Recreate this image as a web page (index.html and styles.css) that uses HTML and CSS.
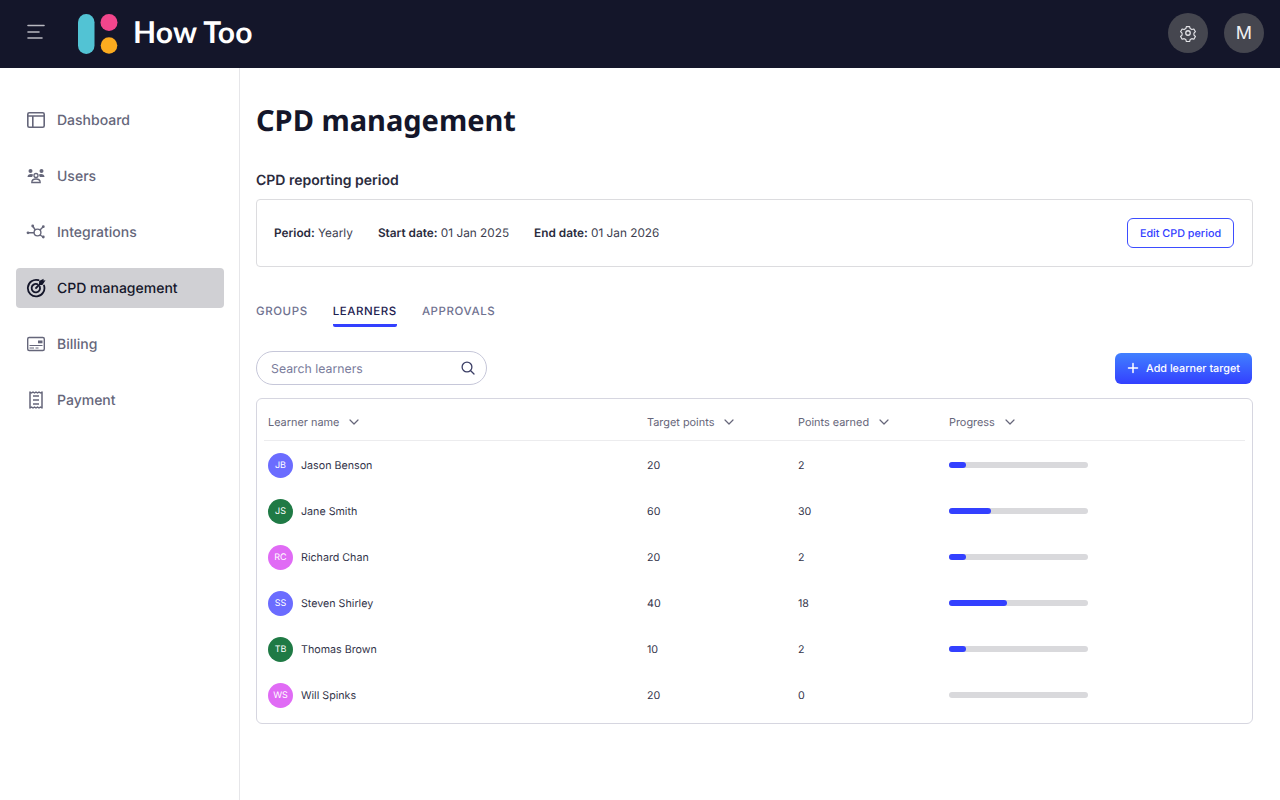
FILE: index.html
```html
<!DOCTYPE html>
<html lang="en">
<head>
<meta charset="utf-8">
<title>CPD management</title>
<link rel="stylesheet" href="styles.css">
</head>
<body>
<header class="topbar">
  <div class="brand">
    <svg class="burger" width="20" height="16" viewBox="0 0 20 16" fill="none" stroke="#b8b8c0" stroke-width="1.600" stroke-linecap="round"><path d="M2 1.500h16M2 8h11M2 14h14"/></svg>
    <svg class="logo" width="40" height="40" viewBox="0 0 40 40"><rect x="0" y="0" width="16.500" height="40" rx="8.200" fill="#52c3d4"/><circle cx="31" cy="8.500" r="8.500" fill="#f2468c"/><circle cx="31" cy="31.500" r="8.300" fill="#fbab1f"/></svg>
    <span class="wordmark">How Too</span>
  </div>
  <div class="actions">
    <div class="round"><svg width="18" height="18" viewBox="0 0 24 24" fill="none" stroke="#e4e4e8" stroke-width="1.700" stroke-linejoin="round"><circle cx="12" cy="12" r="3"/><path d="M9.600 2.500h4.800l.8 3 2.500 1.400 3-.8 2.300 4-2.200 2.200v2.800l.1.100 2.100 2-2.300 4-3-.8-2.500 1.400-.8 3H9.600l-.8-3-2.500-1.400-3 .8-2.300-4 2.200-2.100v-2.800L1 10.100l2.300-4 3 .8 2.500-1.400z" transform="translate(1.200 1.200) scale(.9)"/></svg></div>
    <div class="round initial">M</div>
  </div>
</header>
<div class="shell">
  <nav class="sidebar">
    <a class="nav-item"><svg width="20" height="20" viewBox="0 0 20 20" fill="none" stroke="currentColor" stroke-width="1.600"><rect x="1.800" y="2.800" width="16.400" height="14.400" rx="1.500"/><path d="M1.800 6h16.400M6.800 6v11.200"/></svg>Dashboard</a>
    <a class="nav-item"><svg width="20" height="20" viewBox="0 0 20 20" fill="currentColor"><circle cx="4.500" cy="5" r="2"/><circle cx="15.500" cy="5" r="2"/><path d="M1.500 11c0-2 1.500-3 3.500-3 1 0 1.800.2 2.300.7-.6.6-1 1.400-1.100 2.300zM18.500 11c0-2-1.500-3-3.500-3-1 0-1.800.2-2.300.7.600.6 1 1.400 1.100 2.300z"/><g fill="none" stroke="currentColor" stroke-width="1.300"><circle cx="10" cy="9.500" r="2"/><path d="M5.800 16.500c0-2.400 1.800-3.500 4.200-3.500s4.200 1.100 4.200 3.500z"/></g></svg>Users</a>
    <a class="nav-item"><svg width="20" height="20" viewBox="0 0 20 20" fill="none" stroke="currentColor" stroke-width="1.400"><circle cx="11.500" cy="10.500" r="3.400"/><path d="M8 10.800H2M9.300 8 6.700 4M14 8l3.200-3.200M14 13l3.200 2"/><g fill="currentColor" stroke="none"><circle cx="2" cy="10.800" r="1.400"/><circle cx="6.700" cy="4" r="1.400"/><circle cx="17.300" cy="4.700" r="1.400"/><circle cx="17.300" cy="15" r="1.400"/></g></svg>Integrations</a>
    <a class="nav-item active"><svg width="20" height="20" viewBox="0 0 20 20" fill="none" stroke="currentColor" stroke-width="1.800" stroke-linecap="round"><path d="M12.500 2.200A8.300 8.300 0 1 0 18 7.500"/><path d="M11.200 6.200a4.200 4.200 0 1 0 2.600 2.600"/><path d="M10 10l4-4"/><path d="M14 3.500l2.500-1.200-.2 1.400 1.400-.2-1.800 2.700h-1.900z" fill="currentColor"/></svg>CPD management</a>
    <a class="nav-item"><svg width="20" height="20" viewBox="0 0 20 20" fill="none" stroke="currentColor" stroke-width="1.400"><rect x="1.700" y="3.500" width="16.600" height="13" rx="1.500"/><path d="M3.500 11.500h13M3.500 14h4.500M9.500 14h3" stroke-width="1.100"/><rect x="12" y="6.500" width="4.500" height="2.800" fill="currentColor" stroke="none"/></svg>Billing</a>
    <a class="nav-item"><svg width="20" height="20" viewBox="0 0 20 20" fill="none" stroke="currentColor" stroke-width="1.500"><path d="M4 2l1.500 1L7 2l1.500 1L10 2l1.500 1L13 2l1.500 1L16 2v16l-1.500-1-1.500 1-1.500-1-1.500 1-1.500-1L7 18l-1.500-1L4 18z" stroke-linejoin="round"/><path d="M7 6h6M7 10h6M7 14h6"/></svg>Payment</a>
  </nav>
  <main class="content">
    <h1 class="title">CPD management</h1>
    <h2 class="subtitle">CPD reporting period</h2>
    <section class="period-card">
      <div class="period-info">
        <span><b>Period:</b> Yearly</span>
        <span><b>Start date:</b> 01 Jan 2025</span>
        <span><b>End date:</b> 01 Jan 2026</span>
      </div>
      <button class="btn-outline">Edit CPD period</button>
    </section>
    <div class="tabs">
      <span class="tab">GROUPS</span>
      <span class="tab tab-active">LEARNERS</span>
      <span class="tab">APPROVALS</span>
    </div>
    <div class="toolbar">
      <div class="search">
        <span class="search-label">Search learners</span>
        <svg width="16" height="16" viewBox="0 0 16 16" fill="none" stroke="#3c3f66" stroke-width="1.300" stroke-linecap="round"><circle cx="7" cy="7" r="4.900"/><path d="M10.700 10.700l3.300 3.300"/></svg>
      </div>
      <button class="btn-primary"><svg width="12" height="12" viewBox="0 0 12 12" fill="none" stroke="#fff" stroke-width="1.500" stroke-linecap="round"><path d="M6 1.500v9M1.500 6h9"/></svg>Add learner target</button>
    </div>
    <section class="table">
      <div class="row head">
        <div class="col-name">Learner name<svg class="chev" width="10" height="6" viewBox="0 0 10 6" fill="none" stroke="#66667a" stroke-width="1.200" stroke-linecap="round" stroke-linejoin="round"><path d="M1 1l4 4 4-4"/></svg></div>
        <div class="col-num">Target points<svg class="chev" width="10" height="6" viewBox="0 0 10 6" fill="none" stroke="#66667a" stroke-width="1.200" stroke-linecap="round" stroke-linejoin="round"><path d="M1 1l4 4 4-4"/></svg></div>
        <div class="col-num">Points earned<svg class="chev" width="10" height="6" viewBox="0 0 10 6" fill="none" stroke="#66667a" stroke-width="1.200" stroke-linecap="round" stroke-linejoin="round"><path d="M1 1l4 4 4-4"/></svg></div>
        <div class="col-prog">Progress<svg class="chev" width="10" height="6" viewBox="0 0 10 6" fill="none" stroke="#66667a" stroke-width="1.200" stroke-linecap="round" stroke-linejoin="round"><path d="M1 1l4 4 4-4"/></svg></div>
      </div>
      <div class="row">
        <div class="col-name"><span class="avatar violet">JB</span>Jason Benson</div>
        <div class="col-num">20</div><div class="col-num">2</div>
        <div class="col-prog"><div class="track"><div class="fill" style="width:17px"></div></div></div>
      </div>
      <div class="row">
        <div class="col-name"><span class="avatar green">JS</span>Jane Smith</div>
        <div class="col-num">60</div><div class="col-num">30</div>
        <div class="col-prog"><div class="track"><div class="fill" style="width:42px"></div></div></div>
      </div>
      <div class="row">
        <div class="col-name"><span class="avatar pink">RC</span>Richard Chan</div>
        <div class="col-num">20</div><div class="col-num">2</div>
        <div class="col-prog"><div class="track"><div class="fill" style="width:17px"></div></div></div>
      </div>
      <div class="row">
        <div class="col-name"><span class="avatar violet">SS</span>Steven Shirley</div>
        <div class="col-num">40</div><div class="col-num">18</div>
        <div class="col-prog"><div class="track"><div class="fill" style="width:58px"></div></div></div>
      </div>
      <div class="row">
        <div class="col-name"><span class="avatar green">TB</span>Thomas Brown</div>
        <div class="col-num">10</div><div class="col-num">2</div>
        <div class="col-prog"><div class="track"><div class="fill" style="width:17px"></div></div></div>
      </div>
      <div class="row">
        <div class="col-name"><span class="avatar pink">WS</span>Will Spinks</div>
        <div class="col-num">20</div><div class="col-num">0</div>
        <div class="col-prog"><div class="track"></div></div>
      </div>
    </section>
  </main>
</div>
</body>
</html>
```
FILE: styles.css
```css
* { box-sizing: border-box; }
html, body { margin: 0; height: 100%; }
body { font-family: Inter, "Liberation Sans", sans-serif; color: #14162a; background: #fff; overflow: hidden; text-rendering: geometricPrecision; }

.topbar { height: 68px; background: #14162a; display: flex; align-items: center; justify-content: space-between; padding: 0 16px 0 26px; }
.brand { display: flex; align-items: center; }
.burger { margin-right: 32px; margin-bottom: 4px; }
.logo { margin-right: 15px; }
.wordmark { font-family: Lato, "Open Sans", sans-serif; font-weight: 700; font-size: 30px; letter-spacing: .2px; color: #fff; line-height: 36px; padding-bottom: 4px; }
.actions { display: flex; gap: 16px; margin-bottom: 2px; }
.round { width: 40px; height: 40px; border-radius: 50%; background: #45464f; display: flex; align-items: center; justify-content: center; }
.initial { color: #f0f0f2; font-size: 18px; }

.shell { display: flex; height: 732px; }
.sidebar { width: 240px; border-right: 1px solid #e6e6e9; padding: 32px 15px 0 16px; display: flex; flex-direction: column; gap: 16px; }
.nav-item { height: 40px; border-radius: 4px; display: flex; align-items: center; gap: 11px; padding-left: 10px; font-size: 14px; line-height: 19px; font-weight: 500; color: #65667a; }
.nav-item svg { flex: none; }
.active { background: #d0d0d4; color: #14162a; }

.content { width: 1012px; padding: 32px 0 0 16px; }
.title { margin: 0 0 27px; padding-top: 1px; font-family: "Noto Sans", sans-serif; font-size: 29px; line-height: 40px; font-weight: 700; color: #14162a; }
.subtitle { margin: 0 0 6px; padding-top: 1px; font-size: 14px; line-height: 24px; font-weight: 600; color: #2a2b3d; }

.period-card { width: 997px; height: 68px; border: 1px solid #dcdcdf; border-radius: 4px; display: flex; align-items: center; justify-content: space-between; padding: 0 18px 0 17px; }
.period-info { display: flex; gap: 25px; font-size: 11.800px; line-height: 15px; color: #3c3d4e; }
.period-info b { font-weight: 600; color: #2a2b3d; }
.btn-outline { width: 107px; height: 30px; border: 1px solid #3d4dff; border-radius: 6px; background: #fff; color: #3340ff; font: 500 10.800px Inter, sans-serif; text-rendering: geometricPrecision; padding: 0; }

.tabs { margin-top: 30px; height: 30px; display: flex; gap: 25px; }
.tab { height: 30px; padding-top: 7px; font-size: 11.500px; line-height: 15px; font-weight: 500; letter-spacing: .58px; color: #6f7290; }
.tab-active { color: #1d2050; border-bottom: 3px solid #3340ff; border-radius: 0 0 2px 2px; }

.toolbar { width: 996px; margin-top: 24px; height: 34px; display: flex; align-items: center; justify-content: space-between; }
.search { width: 231px; height: 34px; border: 1px solid #c6c7d9; border-radius: 17px; display: flex; align-items: center; justify-content: space-between; padding: 0 10px 0 14px; font-size: 12.300px; color: #7a7c9c; }
.search-label { padding-top: 1px; }
.btn-primary { width: 137px; height: 31px; border: 0; border-radius: 6px; background: linear-gradient(#4180ff, #3340ff); color: #fff; font: 500 10.800px Inter, sans-serif; text-rendering: geometricPrecision; display: flex; align-items: center; justify-content: center; gap: 7px; padding: 0; }

.table { width: 997px; height: 326px; margin-top: 13px; border: 1px solid #d6d6e0; border-radius: 6px; padding: 0 7px 0 7px; }
.row { display: flex; align-items: center; height: 46px; font-size: 10.700px; line-height: 15px; color: #33344a; }
.head { height: 42px; padding-top: 5px; margin-bottom: 1px; border-bottom: 1px solid #ececee; font-size: 10.900px; color: #66667a; }
.col-name { width: 383px; padding-left: 4px; display: flex; align-items: center; }
.col-num { width: 151px; display: flex; align-items: center; }
.col-prog { flex: 1; display: flex; align-items: center; }
.chev { margin-left: 10px; }
.avatar { width: 25px; height: 25px; padding-top: 1px; border-radius: 50%; color: #fff; font-size: 9px; display: flex; align-items: center; justify-content: center; margin-right: 8px; }
.violet { background: #6b6cff; }
.green { background: #1f7a45; }
.pink { background: #e06bf5; }
.track { width: 139px; height: 6px; border-radius: 3px; background: #d9d9dc; }
.fill { height: 6px; border-radius: 3px; background: #3340ff; }
```
